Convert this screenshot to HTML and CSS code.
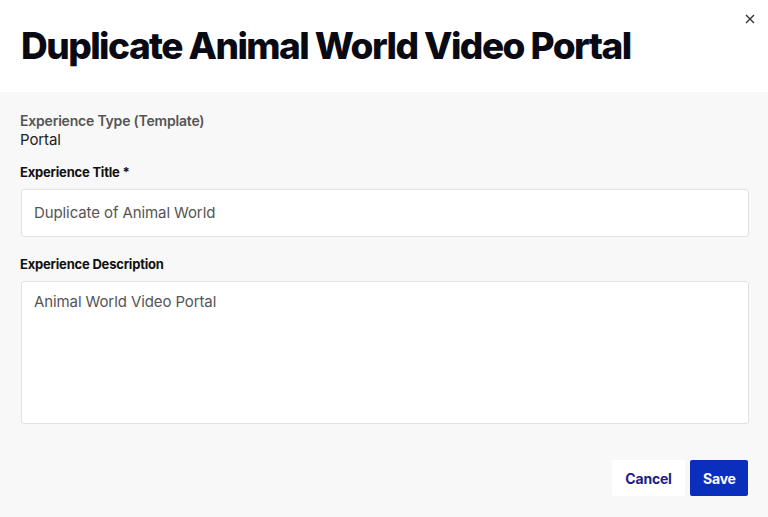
FILE: index.html
```html
<!DOCTYPE html>
<html>
<head>
<meta charset="utf-8">
<link rel="stylesheet" href="styles.css">
</head>
<body>
<div class="modal">
  <header class="header">
    <h1 class="title">Duplicate Animal World Video Portal</h1>
    <button class="close" aria-label="Close">
      <svg width="10" height="10" viewBox="0 0 10 10"><path d="M1 1L9 9M9 1L1 9" stroke="#333" stroke-width="1.4" fill="none"/></svg>
    </button>
  </header>
  <main class="body">
    <div class="type-label">Experience Type (Template)</div>
    <div class="type-value">Portal</div>
    <label class="field-label">Experience Title *</label>
    <div class="input">Duplicate of Animal World</div>
    <label class="field-label desc-label">Experience Description</label>
    <div class="textarea">Animal World Video Portal</div>
    <div class="actions">
      <button class="btn cancel">Cancel</button>
      <button class="btn save">Save</button>
    </div>
  </main>
</div>
</body>
</html>
```

FILE: styles.css
```css
* { box-sizing: border-box; }
html, body { margin: 0; padding: 0; }
body {
  width: 768px;
  height: 517px;
  font-family: Inter, "Liberation Sans", sans-serif;
  background: #f8f8f8;
  overflow: hidden;
}
.modal { display: flex; flex-direction: column; height: 517px; }
.header {
  position: relative;
  background: #fff;
  height: 92px;
  padding: 24px 21px 0;
}
.title {
  margin: 0;
  font-size: 37px;
  font-weight: 800;
  letter-spacing: -1.55px;
  color: #0a0a14;
  line-height: 44px;
}
.close {
  position: absolute;
  top: 14px;
  right: 13px;
  border: 0;
  background: none;
  padding: 0;
  width: 10px;
  height: 10px;
  display: flex;
}
.body {
  flex: 1;
  padding: 20px 19px 0 20px;
  display: flex;
  flex-direction: column;
}
.type-label {
  font-size: 14px;
  font-weight: 600;
  color: #555;
  line-height: 18px;
  letter-spacing: -0.2px;
}
.type-value {
  font-size: 15px;
  color: #222;
  line-height: 19px;
  letter-spacing: -0.1px;
}
.field-label {
  display: block;
  font-size: 13px;
  font-weight: 700;
  color: #111;
  line-height: 16px;
  margin-top: 15px;
  letter-spacing: -0.2px;
}
.desc-label { margin-top: 19px; }
.input, .textarea {
  background: #fff;
  border: 1px solid #e2e2e2;
  border-radius: 3px;
  font-size: 15px;
  color: #555;
  padding: 0 12px;
  letter-spacing: -0.1px;
  margin-left: 1px;
}
.input {
  height: 48px;
  line-height: 46px;
  margin-top: 9px;
}
.textarea {
  height: 143px;
  margin-top: 9px;
  padding-top: 10px;
  line-height: 20px;
}
.actions {
  display: flex;
  justify-content: flex-end;
  gap: 5px;
  margin-top: 36px;
  padding-right: 1px;
}
.btn {
  height: 36px;
  border: 0;
  border-radius: 2px;
  font-family: Inter, "Liberation Sans", sans-serif;
  font-size: 14px;
  font-weight: 700;
  padding: 0 13px;
  letter-spacing: -0.2px;
}
.cancel { background: #fff; color: #1c1c8a; width: 73px; }
.save { background: #0b2fbd; color: #fff; width: 58px; }
```
